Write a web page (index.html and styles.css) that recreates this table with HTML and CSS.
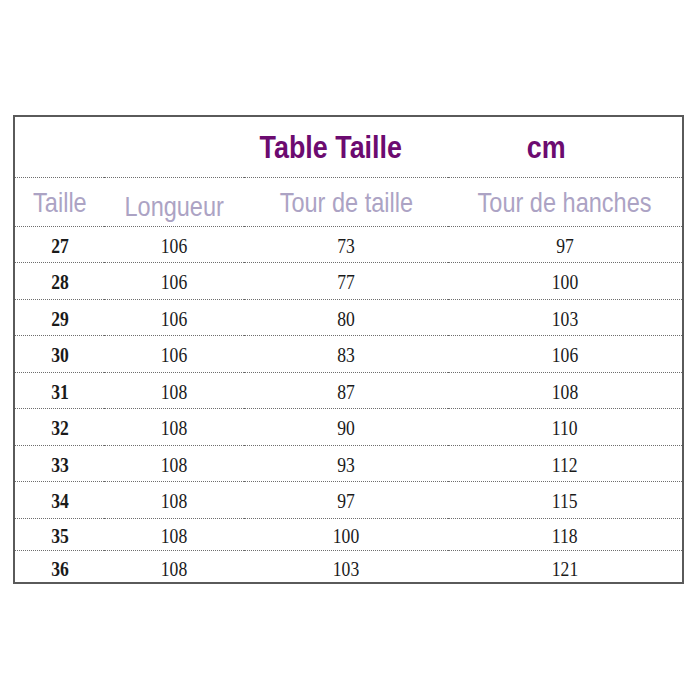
FILE: index.html
```html
<!DOCTYPE html>
<html>
<head>
<meta charset="utf-8">
<link rel="stylesheet" href="styles.css">
</head>
<body>
<div class="page">
  <table class="size-table">
    <colgroup>
      <col class="c1"><col class="c2"><col class="c3"><col class="c4">
    </colgroup>
    <tr class="title-row">
      <td colspan="3" class="title-cell"><span class="narrow">Table Taille</span></td>
      <td class="unit-cell"><span class="narrow">cm</span></td>
    </tr>
    <tr class="head-row">
      <th class="h-taille"><span class="narrow">Taille</span></th>
      <th class="h-long"><span class="narrow">Longueur</span></th>
      <th><span class="narrow">Tour de taille</span></th>
      <th><span class="narrow">Tour de hanches</span></th>
    </tr>
    <tr class="row"><td class="size"><span>27</span></td><td><span>106</span></td><td><span>73</span></td><td><span>97</span></td></tr>
    <tr class="row"><td class="size"><span>28</span></td><td><span>106</span></td><td><span>77</span></td><td><span>100</span></td></tr>
    <tr class="row"><td class="size"><span>29</span></td><td><span>106</span></td><td><span>80</span></td><td><span>103</span></td></tr>
    <tr class="row"><td class="size"><span>30</span></td><td><span>106</span></td><td><span>83</span></td><td><span>106</span></td></tr>
    <tr class="row"><td class="size"><span>31</span></td><td><span>108</span></td><td><span>87</span></td><td><span>108</span></td></tr>
    <tr class="row"><td class="size"><span>32</span></td><td><span>108</span></td><td><span>90</span></td><td><span>110</span></td></tr>
    <tr class="row"><td class="size"><span>33</span></td><td><span>108</span></td><td><span>93</span></td><td><span>112</span></td></tr>
    <tr class="row"><td class="size"><span>34</span></td><td><span>108</span></td><td><span>97</span></td><td><span>115</span></td></tr>
    <tr class="row short"><td class="size"><span>35</span></td><td><span>108</span></td><td><span>100</span></td><td><span>118</span></td></tr>
    <tr class="row short last"><td class="size"><span>36</span></td><td><span>108</span></td><td><span>103</span></td><td><span>121</span></td></tr>
  </table>
</div>
</body>
</html>
```

FILE: styles.css
```css
html, body {
  margin: 0;
  padding: 0;
  background: #ffffff;
}
.page {
  padding: 115px 0 0 13px;
}
.size-table {
  border-collapse: collapse;
  width: 669px;
  table-layout: fixed;
  border: 2px solid #5a5a5a;
}
.c1 { width: 90px; }
.c2 { width: 140px; }
.c3 { width: 204px; }
.c4 { width: 235px; }
.size-table td, .size-table th {
  padding: 0;
  text-align: center;
  border-bottom: 1px dotted #6e6e6e;
}
.narrow {
  display: inline-block;
  font-family: "Liberation Sans", Arial, sans-serif;
  transform: scaleX(0.84);
}
.title-row {
  height: 61px;
}
.title-cell {
  text-align: left !important;
  padding-left: 231px !important;
  font-weight: bold;
  font-size: 32px;
  color: #6c0b70;
  vertical-align: middle;
}
.unit-cell {
  font-weight: bold;
  font-size: 32px;
  color: #6c0b70;
  padding-right: 38px !important;
}
.title-row td {
  padding-bottom: 0;
  padding-top: 2px;
}
.head-row {
  height: 49px;
}
.head-row th {
  font-weight: normal;
  font-size: 28px;
  color: #aca3c4;
  vertical-align: middle;
  padding-bottom: 0;
  padding-top: 2px;
}
.head-row .h-long {
  padding-top: 10px;
}
.row {
  height: 36.5px;
}
.row.short {
  height: 32px;
}
.row.last {
  height: 33px;
}
.row td {
  font-family: "Liberation Serif", "Times New Roman", serif;
  font-size: 20px;
  color: #1a1a1a;
  padding-top: 4px;
}
.row.last td {
  padding-top: 6px;
}
.row td span {
  display: inline-block;
  transform: scaleX(0.88);
}
.row td.size {
  font-weight: bold;
}
.row.last td {
  border-bottom: none;
}
```
